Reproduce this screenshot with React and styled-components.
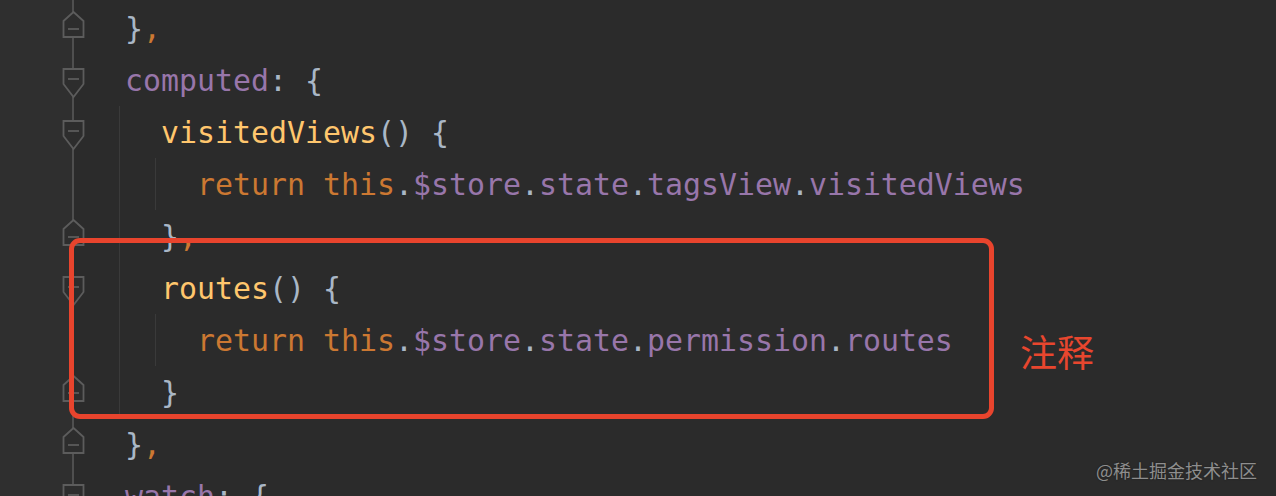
import styled, { createGlobalStyle } from 'styled-components';

const GlobalStyle = createGlobalStyle`
    html, body {
        margin: 0;
        padding: 0;
        background: #2b2b2b;
    }
`;

const colors = {
    punc: '#a9b7c6',
    kw: '#cc7832',
    prop: '#9876aa',
    fn: '#ffc66d',
};

const Editor = styled.div`
    position: relative;
    width: 1276px;
    height: 496px;
    overflow: hidden;
    box-sizing: border-box;
    padding-top: 2px;
    background: linear-gradient(
        to right,
        #2f2f2f 0 72px,
        #4f4f4f 72px 74px,
        #2b2b2b 74px 100%
    );
`;

const Line = styled.div`
    display: flex;
    height: 52px;
`;

const Gutter = styled.div`
    width: 119px;
    flex: none;
    display: flex;
    padding-left: 62px;
    box-sizing: border-box;
`;

const Code = styled.div`
    display: flex;
    align-items: stretch;
`;

const Guide = styled.span`
    width: 36px;
    flex: none;
    border-left: 1px solid #3a3a3a;
    box-sizing: border-box;
`;

const Text = styled.span`
    padding-left: 6px;
    display: flex;
    align-items: center;
    white-space: pre;
    font-family: "DejaVu Sans Mono", "Liberation Mono", monospace;
    font-size: 29.9px;
`;

const Token = styled.span`
    color: ${(p) => colors[p.$kind]};
`;

const Annotation = styled.div`
    position: absolute;
    left: 69px;
    top: 238px;
    display: flex;
    align-items: flex-start;
    gap: 26px;
`;

const Box = styled.div`
    width: 925px;
    height: 181px;
    box-sizing: border-box;
    border: 5px solid #e8442d;
    border-radius: 11px;
`;

const Label = styled.span`
    margin-top: 95px;
    font-family: "Noto Sans CJK SC", sans-serif;
    font-size: 37px;
    line-height: 1;
    color: #e8462e;
`;

const Watermark = styled.div`
    position: absolute;
    right: 19px;
    bottom: 17px;
    font-family: "Noto Sans CJK SC", sans-serif;
    font-size: 18px;
    line-height: 1;
    color: #8e8e8e;
    text-shadow: 0 0 2px rgba(0, 0, 0, 0.4);
`;

function FoldMarker({ type }) {
    const stroke = '#5c5c5c';
    const fill = '#2d2d2d';
    const shape =
        type === 'start'
            ? 'M1.5 15 H21.5 V30 L11.5 43 L1.5 30 Z'
            : 'M11.5 10 L21.5 19 V35 H1.5 V19 Z';
    const minusY = type === 'start' ? 25 : 27;
    return (
        <svg width="23" height="52" viewBox="0 0 23 52">
            <path d={shape} fill={fill} stroke={stroke} strokeWidth="1.8" strokeLinejoin="miter" />
            <line x1="6" y1={minusY} x2="17" y2={minusY} stroke={stroke} strokeWidth="1.8" />
        </svg>
    );
}

const lines = [
    { fold: 'end', indent: 0, tokens: [['}', 'punc'], [',', 'kw']] },
    { fold: 'start', indent: 0, tokens: [['computed', 'prop'], [': {', 'punc']] },
    { fold: 'start', indent: 1, tokens: [['visitedViews', 'fn'], ['() {', 'punc']] },
    {
        indent: 2,
        tokens: [
            ['return this', 'kw'], ['.', 'punc'], ['$store', 'prop'], ['.', 'punc'],
            ['state', 'prop'], ['.', 'punc'], ['tagsView', 'prop'], ['.', 'punc'],
            ['visitedViews', 'prop'],
        ],
    },
    { fold: 'end', indent: 1, tokens: [['}', 'punc'], [',', 'kw']] },
    { fold: 'start', indent: 1, tokens: [['routes', 'fn'], ['() {', 'punc']] },
    {
        indent: 2,
        tokens: [
            ['return this', 'kw'], ['.', 'punc'], ['$store', 'prop'], ['.', 'punc'],
            ['state', 'prop'], ['.', 'punc'], ['permission', 'prop'], ['.', 'punc'],
            ['routes', 'prop'],
        ],
    },
    { fold: 'end', indent: 1, tokens: [['}', 'punc']] },
    { fold: 'end', indent: 0, tokens: [['}', 'punc'], [',', 'kw']] },
    { fold: 'start', indent: 0, tokens: [['watch', 'prop'], [': {', 'punc']] },
];

export default function App() {
    return (
        <>
            <GlobalStyle />
            <Editor>
                {lines.map((line, i) => (
                    <Line key={i}>
                        <Gutter>{line.fold && <FoldMarker type={line.fold} />}</Gutter>
                        <Code>
                            {Array.from({ length: line.indent }).map((_, g) => (
                                <Guide key={g} />
                            ))}
                            <Text>
                                {line.tokens.map(([text, kind], t) => (
                                    <Token key={t} $kind={kind}>{text}</Token>
                                ))}
                            </Text>
                        </Code>
                    </Line>
                ))}
                <Annotation>
                    <Box />
                    <Label>注释</Label>
                </Annotation>
                <Watermark>@稀土掘金技术社区</Watermark>
            </Editor>
        </>
    );
}
